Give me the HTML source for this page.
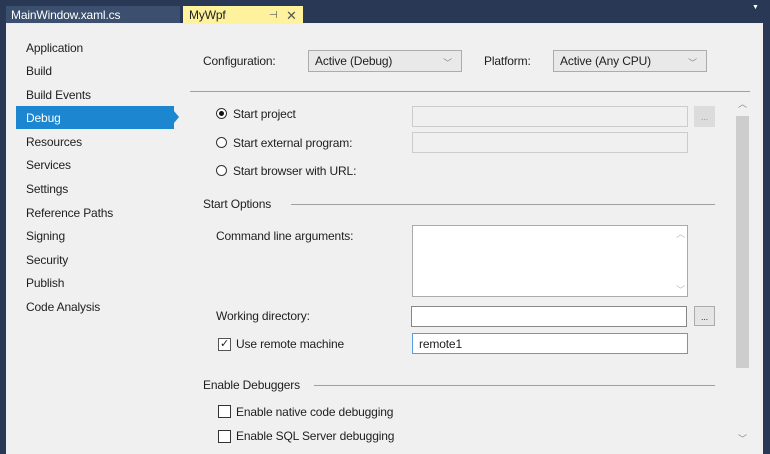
<!DOCTYPE html>
<html><head><style>
body{margin:0;width:770px;height:454px;background:#293955;font-family:"Liberation Sans",sans-serif;font-size:12px;color:#1e1e1e;position:relative;overflow:hidden;letter-spacing:-0.15px}
.a{position:absolute}
.panel{left:6px;top:24px;width:757px;height:430px;background:#f0f0f0}
.nav div{position:absolute;left:26px}
.tb{background:#fff;border:1px solid #ccc;box-sizing:border-box}
.dis{background:#f0f0f0;border:1px solid #ccc;box-sizing:border-box}
.combo{border:1px solid #acacac;background:#e9e9e9;box-sizing:border-box;height:22px;padding:3px 6px}
.combo span{position:absolute;right:9px;top:5px;color:#888;font-size:9px}
.rad{width:11px;height:11px;border:1px solid #333;border-radius:50%;box-sizing:border-box;background:#fff}
.chk{width:13px;height:13px;border:1px solid #333;box-sizing:border-box;background:#fff}
.hr{height:1px;background:#a0a0a0}
.btn{border:1px solid #acacac;background:#e5e5e5;box-sizing:border-box;text-align:center;font-size:9px;line-height:12px;color:#333}
</style></head><body>
<div class="a" style="left:6px;top:6px;width:174px;height:18px;background:#3c4f6e;color:#fff;font-size:12px;line-height:18px;padding-left:5px;box-sizing:border-box">MainWindow.xaml.cs</div>
<div class="a" style="left:183px;top:6px;width:120px;height:19px;background:#fff29d;line-height:19px;padding-left:6px;box-sizing:border-box;color:#1e1e1e">MyWpf<span style="position:absolute;left:86px;font-size:10px;color:#555">⊣</span><span style="position:absolute;left:103px;color:#555;font-size:13px">✕</span></div>
<div class="a" style="left:6px;top:23px;width:757px;height:2px;background:#fff29d"></div>
<div class="a" style="left:752px;top:4px;color:#fff;font-size:7px">▼</div>
<div class="a panel"></div>
<div class="nav">
<div style="top:41px">Application</div>
<div style="top:64px">Build</div>
<div style="top:88px">Build Events</div>
<div class="a" style="left:16px;top:106px;width:158px;height:23px;background:#1c86d1"></div>
<div style="top:111px;color:#fff">Debug</div>
<div class="a" style="left:174px;top:111px;width:0;height:0;border-top:6px solid transparent;border-bottom:6px solid transparent;border-left:5px solid #1c86d1"></div>
<div style="top:135px">Resources</div>
<div style="top:158px">Services</div>
<div style="top:182px">Settings</div>
<div style="top:206px">Reference Paths</div>
<div style="top:229px">Signing</div>
<div style="top:253px">Security</div>
<div style="top:276px">Publish</div>
<div style="top:300px">Code Analysis</div>
</div>
<div class="a" style="left:203px;top:54px">Configuration:</div>
<div class="a combo" style="left:308px;top:50px;width:154px">Active (Debug)<span>﹀</span></div>
<div class="a" style="left:484px;top:54px">Platform:</div>
<div class="a combo" style="left:553px;top:50px;width:154px">Active (Any CPU)<span>﹀</span></div>
<div class="a hr" style="left:190px;top:91px;width:560px"></div>
<div class="a rad" style="left:216px;top:108px"><div style="width:5px;height:5px;border-radius:50%;background:#111;margin:2px"></div></div>
<div class="a" style="left:233px;top:107px">Start project</div>
<div class="a dis" style="left:412px;top:106px;width:276px;height:21px"></div>
<div class="a" style="left:694px;top:106px;width:21px;height:21px;background:#dcdcdc;color:#999;font-size:9px;text-align:center;line-height:22px">...</div>
<div class="a rad" style="left:216px;top:137px"></div>
<div class="a" style="left:233px;top:136px">Start external program:</div>
<div class="a dis" style="left:412px;top:132px;width:276px;height:21px"></div>
<div class="a rad" style="left:216px;top:165px"></div>
<div class="a" style="left:233px;top:164px">Start browser with URL:</div>
<div class="a" style="left:203px;top:197px">Start Options</div>
<div class="a hr" style="left:291px;top:204px;width:424px"></div>
<div class="a" style="left:216px;top:229px">Command line arguments:</div>
<div class="a tb" style="left:412px;top:225px;width:276px;height:72px;border-color:#aaa"><span style="position:absolute;right:2px;top:1px;color:#bbb;font-size:9px">︿</span><span style="position:absolute;right:2px;bottom:0;color:#bbb;font-size:9px">﹀</span></div>
<div class="a" style="left:216px;top:309px">Working directory:</div>
<div class="a tb" style="left:411px;top:306px;width:276px;height:21px;border-color:#888"></div>
<div class="a btn" style="left:694px;top:306px;width:21px;height:20px;line-height:20px">...</div>
<div class="a chk" style="left:218px;top:338px;border-color:#555"><span style="position:absolute;left:1px;top:-2px;font-size:11px">✓</span></div>
<div class="a" style="left:236px;top:337px">Use remote machine</div>
<div class="a tb" style="left:412px;top:333px;width:276px;height:21px;border-color:#569de5;padding:3px 6px">remote1</div>
<div class="a" style="left:203px;top:378px">Enable Debuggers</div>
<div class="a hr" style="left:314px;top:385px;width:401px"></div>
<div class="a chk" style="left:218px;top:405px"></div>
<div class="a" style="left:236px;top:405px">Enable native code debugging</div>
<div class="a chk" style="left:218px;top:430px"></div>
<div class="a" style="left:236px;top:429px">Enable SQL Server debugging</div>
<div class="a" style="left:736px;top:96px;width:14px;height:350px;background:#f0f0f0"></div>
<div class="a" style="left:736px;top:116px;width:13px;height:252px;background:#cdcdcd"></div>
<div class="a" style="left:738px;top:97px;color:#888;font-size:9px">︿</div>
<div class="a" style="left:738px;top:432px;color:#888;font-size:9px">﹀</div>
</body></html>
